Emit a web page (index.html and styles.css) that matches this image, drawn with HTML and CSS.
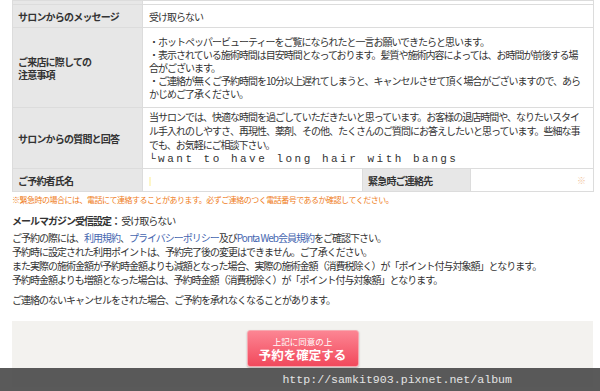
FILE: index.html
```html
<!DOCTYPE html>
<html lang="ja">
<head>
    <meta charset="UTF-8">
    <meta name="viewport" content="width=device-width, initial-scale=1.0">
    <title>予約内容の確認</title>
    <link rel="stylesheet" href="styles.css">
</head>
<body>
    <div class="page">
        <table class="confirm-table">
            <colgroup>
                <col class="col-head">
                <col class="col-name">
                <col class="col-subhead">
                <col class="col-tel">
            </colgroup>
            <tr class="cut-row">
                <th></th>
                <td colspan="3"></td>
            </tr>
            <tr class="row-short">
                <th>サロンからのメッセージ</th>
                <td colspan="3">受け取らない</td>
            </tr>
            <tr>
                <th>ご来店に際しての<br>注意事項</th>
                <td colspan="3">
                    ・ホットペッパービューティーをご覧になられたと一言お願いできたらと思います。<br>
                    ・表示されている施術時間は目安時間となっております。髪質や施術内容によっては、お時間が前後する場合がございます。<br>
                    ・ご連絡が無くご予約時間を10分以上遅れてしまうと、キャンセルさせて頂く場合がございますので、あらかじめご了承ください。
                </td>
            </tr>
            <tr class="row-qa">
                <th>サロンからの質問と回答</th>
                <td colspan="3">
                    当サロンでは、快適な時間を過ごしていただきたいと思っています。お客様の退店時間や、なりたいスタイル手入れのしやすさ、再現性、薬剤、その他、たくさんのご質問にお答えしたいと思っています。些細な事でも、お気軽にご相談下さい。
                    <div class="answer">└want to have long hair with bangs</div>
                </td>
            </tr>
            <tr class="row-short">
                <th>ご予約者氏名</th>
                <td><span class="caret"></span></td>
                <th>緊急時ご連絡先</th>
                <td class="tel-cell"><span class="mark">※</span></td>
            </tr>
        </table>

        <p class="note">※緊急時の場合には、電話にて連絡することがあります。必ずご連絡のつく電話番号であるか確認してください。</p>

        <p class="mail-setting"><strong>メールマガジン受信設定：</strong> 受け取らない</p>

        <p class="terms">
            ご予約の際には、<a href="#">利用規約</a>、<a href="#">プライバシーポリシー</a>及び<a href="#">Ponta Web会員規約</a>をご確認下さい。<br>
            予約時に設定された利用ポイントは、予約完了後の変更はできません。ご了承ください。<br>
            また実際の施術金額が予約時金額よりも減額となった場合、実際の施術金額（消費税除く）が「ポイント付与対象額」となります。<br>
            予約時金額よりも増額となった場合は、予約時金額（消費税除く）が「ポイント付与対象額」となります。
        </p>

        <p class="terms">ご連絡のないキャンセルをされた場合、ご予約を承れなくなることがあります。</p>

        <div class="submit-area">
            <button type="button" class="confirm-button">
                <span class="small">上記に同意の上</span>
                <span class="big">予約を確定する</span>
            </button>
        </div>
    </div>

    <div class="watermark">http://samkit903.pixnet.net/album</div>
</body>
</html>
```

FILE: styles.css
```css
html, body {
    margin: 0;
    padding: 0;
    background: #fff;
    overflow: hidden;
}
body {
    font-family: "Noto Sans CJK JP", "Noto Sans", sans-serif;
    font-size: 10px;
    letter-spacing: -1px;
    color: #333;
    height: 391px;
    position: relative;
}
.page {
    padding: 0 8px 0 12px;
}
.confirm-table {
    width: 581px;
    border-collapse: collapse;
    border: 1px solid #dcdcdc;
    table-layout: fixed;
}
.col-head { width: 130px; }
.col-name { width: 220px; }
.col-subhead { width: 108px; }
.col-tel { width: 123px; }
.confirm-table th,
.confirm-table td {
    border: 1px solid #dcdcdc;
    line-height: 13px;
    vertical-align: middle;
}
.confirm-table th {
    background-color: #e7e7e7;
    text-align: left;
    font-weight: bold;
    letter-spacing: -0.8px;
    padding: 0 4px 0 5px;
}
.confirm-table td {
    padding: 7px 8px 7px 6px;
}
.cut-row th,
.cut-row td {
    height: 3px;
    padding: 0;
}
.row-short td,
.row-short th {
    height: 22px;
    padding-top: 0;
    padding-bottom: 0;
}
.row-qa td {
    line-height: 14px;
    padding-top: 2px;
    padding-bottom: 2px;
}
.answer {
    font-family: "Liberation Mono", monospace;
    font-size: 11px;
    letter-spacing: 2.5px;
    line-height: 14px;
}
.caret {
    display: inline-block;
    width: 2px;
    height: 9px;
    background-color: #fdf6c8;
    vertical-align: middle;
}
.tel-cell {
    text-align: right;
}
.mark {
    color: #f2c6a0;
    font-size: 9px;
}
.note {
    color: #ef7d1a;
    font-size: 8px;
    letter-spacing: -0.5px;
    margin: 2px 0 0;
    line-height: 12px;
}
.mail-setting {
    margin: 8px 0 0;
    line-height: 14px;
}
.mail-setting strong {
    font-weight: bold;
}
.terms {
    margin: 3px 0 0;
    line-height: 14px;
}
.terms + .terms {
    margin-top: 6px;
}
.terms a {
    color: #4666b0;
    text-decoration: none;
}
.submit-area {
    width: 581px;
    margin-top: 14px;
    background-color: #f3f2ef;
    padding: 9px 0 20px;
    text-align: center;
}
.confirm-button {
    display: inline-flex;
    flex-direction: column;
    align-items: center;
    justify-content: center;
    width: 112px;
    height: 37px;
    padding: 0;
    border: 1px solid #f7a8b0;
    border-radius: 3px;
    background: linear-gradient(#fc8593, #f2495c);
    box-shadow: 0 1px 2px rgba(0, 0, 0, 0.25);
    color: #fff;
    font-family: inherit;
    letter-spacing: 0;
    cursor: pointer;
}
.confirm-button .small {
    font-size: 8.5px;
    line-height: 12px;
}
.confirm-button .big {
    font-size: 12.5px;
    font-weight: bold;
    line-height: 16px;
}
.watermark {
    position: absolute;
    left: 0;
    right: 0;
    bottom: 0;
    height: 23px;
    background-color: rgba(72, 72, 72, 0.9);
    color: #e4e4e4;
    font-family: "Liberation Mono", monospace;
    font-size: 11.6px;
    letter-spacing: 0;
    line-height: 23px;
    text-align: right;
    padding-right: 88px;
}
```
